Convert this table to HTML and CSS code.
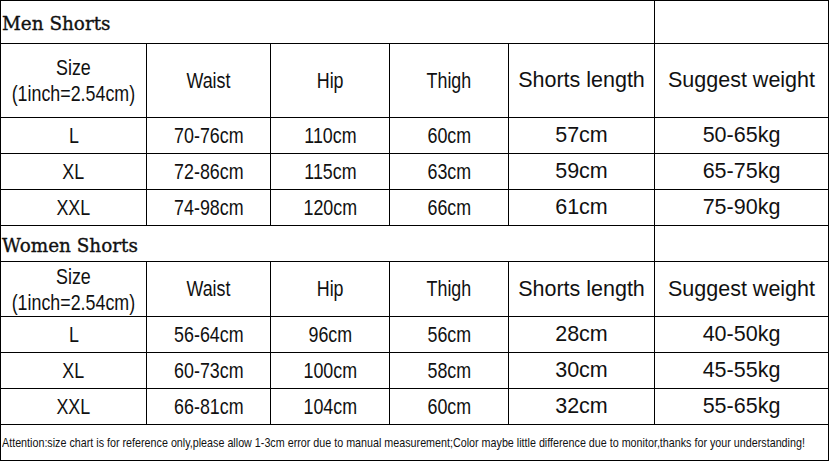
FILE: index.html
```html
<!DOCTYPE html>
<html>
<head>
<meta charset="utf-8">
<link rel="stylesheet" href="styles.css">
</head>
<body>
<div class="chart">
  <div class="cell title span5"><span class="t">Men Shorts</span></div>
  <div class="cell"></div>

  <div class="cell narrow head"><span class="n">Size<br>(1inch=2.54cm)</span></div>
  <div class="cell narrow"><span class="n">Waist</span></div>
  <div class="cell narrow"><span class="n">Hip</span></div>
  <div class="cell narrow"><span class="n">Thigh</span></div>
  <div class="cell wide">Shorts length</div>
  <div class="cell wide">Suggest weight</div>

  <div class="cell narrow"><span class="n">L</span></div>
  <div class="cell narrow"><span class="n">70-76cm</span></div>
  <div class="cell narrow"><span class="n">110cm</span></div>
  <div class="cell narrow"><span class="n">60cm</span></div>
  <div class="cell wide">57cm</div>
  <div class="cell wide">50-65kg</div>

  <div class="cell narrow"><span class="n">XL</span></div>
  <div class="cell narrow"><span class="n">72-86cm</span></div>
  <div class="cell narrow"><span class="n">115cm</span></div>
  <div class="cell narrow"><span class="n">63cm</span></div>
  <div class="cell wide">59cm</div>
  <div class="cell wide">65-75kg</div>

  <div class="cell narrow"><span class="n">XXL</span></div>
  <div class="cell narrow"><span class="n">74-98cm</span></div>
  <div class="cell narrow"><span class="n">120cm</span></div>
  <div class="cell narrow"><span class="n">66cm</span></div>
  <div class="cell wide">61cm</div>
  <div class="cell wide">75-90kg</div>

  <div class="cell title span5"><span class="t">Women Shorts</span></div>
  <div class="cell"></div>

  <div class="cell narrow head"><span class="n">Size<br>(1inch=2.54cm)</span></div>
  <div class="cell narrow"><span class="n">Waist</span></div>
  <div class="cell narrow"><span class="n">Hip</span></div>
  <div class="cell narrow"><span class="n">Thigh</span></div>
  <div class="cell wide">Shorts length</div>
  <div class="cell wide">Suggest weight</div>

  <div class="cell narrow"><span class="n">L</span></div>
  <div class="cell narrow"><span class="n">56-64cm</span></div>
  <div class="cell narrow"><span class="n">96cm</span></div>
  <div class="cell narrow"><span class="n">56cm</span></div>
  <div class="cell wide">28cm</div>
  <div class="cell wide">40-50kg</div>

  <div class="cell narrow"><span class="n">XL</span></div>
  <div class="cell narrow"><span class="n">60-73cm</span></div>
  <div class="cell narrow"><span class="n">100cm</span></div>
  <div class="cell narrow"><span class="n">58cm</span></div>
  <div class="cell wide">30cm</div>
  <div class="cell wide">45-55kg</div>

  <div class="cell narrow"><span class="n">XXL</span></div>
  <div class="cell narrow"><span class="n">66-81cm</span></div>
  <div class="cell narrow"><span class="n">104cm</span></div>
  <div class="cell narrow"><span class="n">60cm</span></div>
  <div class="cell wide">32cm</div>
  <div class="cell wide">55-65kg</div>

  <div class="cell note span6"><span class="m">Attention:size chart is for reference only,please allow 1-3cm error due to manual measurement;Color maybe little difference due to monitor,thanks for your understanding!</span></div>
</div>
</body>
</html>
```

FILE: styles.css
```css
html, body {
  margin: 0;
  padding: 0;
  background: #fff;
}

.chart {
  display: grid;
  width: 827px;
  padding: 1px;
  gap: 1px;
  background: #000;
  grid-template-columns: 145px 123px 118px 118px 145px 173px;
  grid-template-rows: 42px 73px 35px 35px 35px 35px 54px 35px 35px 35px 35px;
}

.cell {
  background: #fff;
  color: #111;
  display: flex;
  align-items: center;
  justify-content: center;
  text-align: center;
  white-space: nowrap;
  overflow: hidden;
}

.span5 { grid-column: span 5; }
.span6 { grid-column: span 6; }

.title {
  justify-content: flex-start;
  padding-left: 1px;
  padding-top: 3px;
  font-family: "DejaVu Serif", "Liberation Serif", serif;
  font-size: 18.4px;
}

.title .t {
  display: inline-block;
  -webkit-text-stroke: 0.35px #111;
}

.narrow {
  font-family: "Liberation Sans", Arial, sans-serif;
  font-size: 21.5px;
  padding-top: 1px;
}

.n {
  display: inline-block;
  flex: none;
  transform: scaleX(0.83);
  transform-origin: center center;
}

.head .n {
  line-height: 26px;
}

.wide {
  font-family: "Liberation Sans", Arial, sans-serif;
  font-size: 21.5px;
}

.note {
  justify-content: flex-start;
  padding-left: 1px;
  font-family: "Liberation Sans", Arial, sans-serif;
  font-size: 13.1px;
}

.m {
  display: inline-block;
  flex: none;
  transform: scaleX(0.82);
  transform-origin: left center;
}
```
